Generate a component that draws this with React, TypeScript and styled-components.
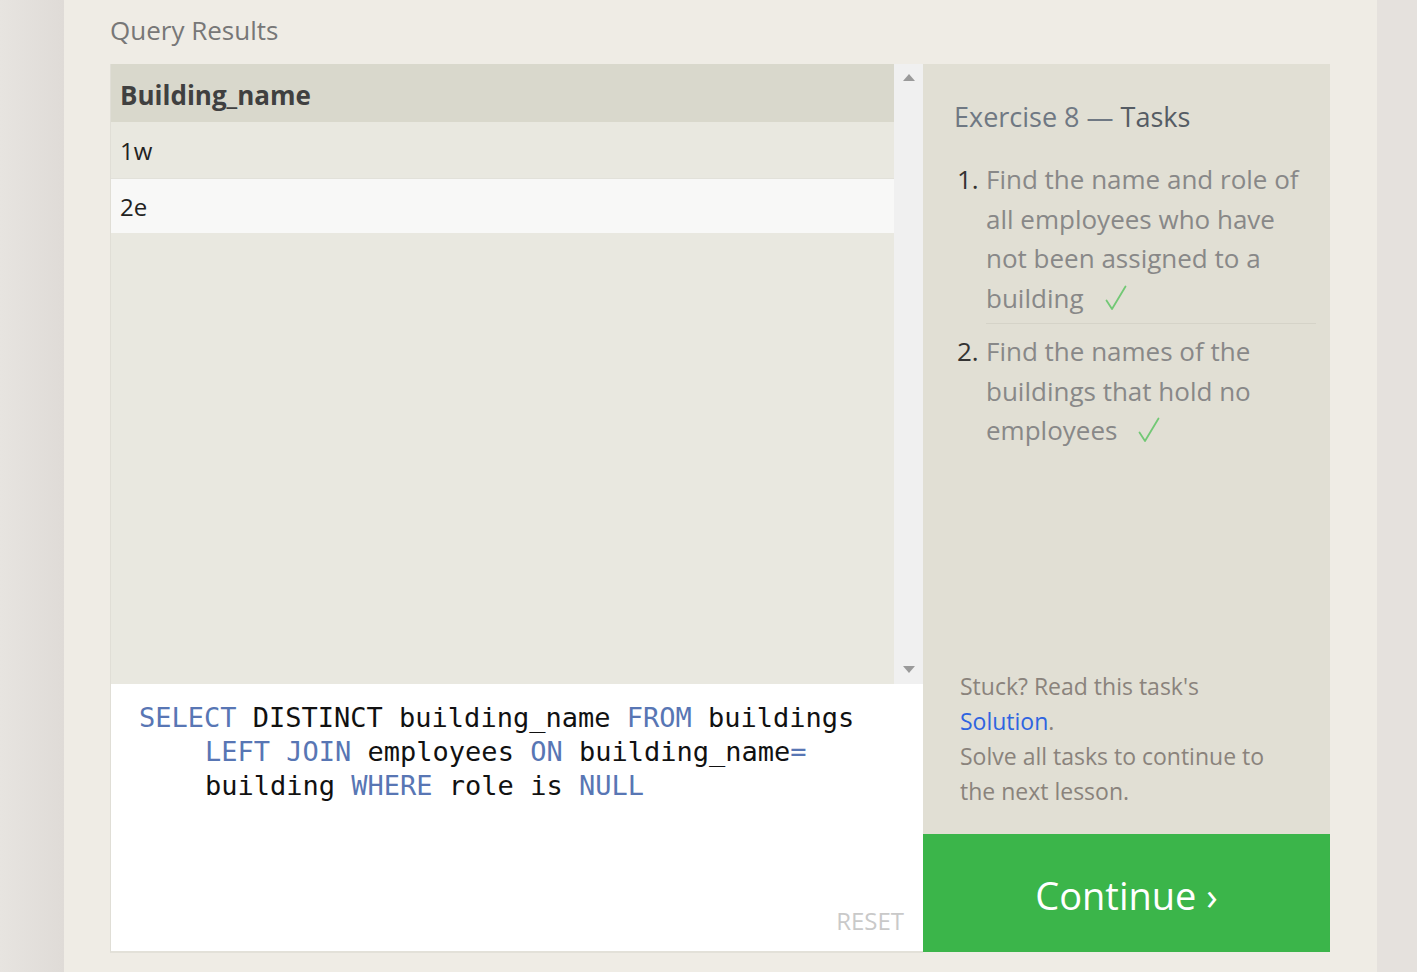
import React from "react";
import styled, { createGlobalStyle } from "styled-components";

const Global = createGlobalStyle`
  html, body { margin: 0; padding: 0; }
  body {
    background: #e5e1dd;
    font-family: "Open Sans", "Noto Sans", sans-serif;
    overflow: hidden;
  }
`;

const Page = styled.div`
  width: 1417px;
  height: 972px;
  display: flex;
  background: linear-gradient(90deg, #e7e4e0 0px, #dfdbd7 64px, #e5e1dd 64px);
`;

const Sheet = styled.div`
  margin-left: 64px;
  width: 1313px;
  height: 972px;
  background: #efece5;
  padding: 0 47px 0 46px;
  box-sizing: border-box;
  display: flex;
  flex-direction: column;
`;

const Title = styled.div`
  height: 64px;
  font-size: 26px;
  color: #777;
  line-height: 60px;
`;

const Main = styled.div`
  display: grid;
  grid-template-columns: 813px 407px;
`;

const LeftCol = styled.div`
  display: flex;
  flex-direction: column;
  border-left: 1px solid #e0ded6;
  border-bottom: 2px solid #e3e1d9;
  box-sizing: border-box;
  height: 889px;
`;

const Results = styled.div`
  height: 620px;
  display: flex;
`;

const Table = styled.div`
  flex: 1;
  background: #e9e8e0;
  display: flex;
  flex-direction: column;
`;

const HeadRow = styled.div`
  height: 58px;
  background: #d9d8cc;
  display: flex;
  align-items: center;
  padding: 3px 0 0 9px;
  box-sizing: border-box;
  font-weight: 700;
  font-size: 26px;
  color: #404040;
`;

const Row = styled.div<{ $alt?: boolean }>`
  height: ${(p) => (p.$alt ? 55 : 56)}px;
  background: ${(p) => (p.$alt ? "#f8f8f7" : "#e9e8e0")};
  border-top: ${(p) => (p.$alt ? "1px solid #e2e1da" : "none")};
  display: flex;
  align-items: center;
  padding: 1px 0 0 9px;
  font-size: 24px;
  color: #222;
  box-sizing: border-box;
`;

const Scrollbar = styled.div`
  width: 29px;
  background: #f0f0f0;
  display: flex;
  flex-direction: column;
  justify-content: space-between;
  align-items: center;
  padding: 10px 0 11px;
  box-sizing: border-box;
`;

const Arrow = styled.div<{ $down?: boolean }>`
  width: 0;
  height: 0;
  border-left: 6px solid transparent;
  border-right: 6px solid transparent;
  ${(p) =>
    p.$down
      ? "border-top: 7px solid #9a9a9a;"
      : "border-bottom: 7px solid #9a9a9a;"}
`;

const Editor = styled.div`
  flex: 1;
  background: #fff;
  position: relative;
  padding: 17px 0 0 28px;
  box-sizing: border-box;
  font-family: "DejaVu Sans Mono", "Liberation Mono", monospace;
  font-size: 27px;
  line-height: 34px;
  color: #111;
  white-space: pre;
`;

const CodeLine = styled.div<{ $indent?: boolean }>`
  padding-left: ${(p) => (p.$indent ? "66px" : "0")};
`;

const Kw = styled.span`
  color: #5876b4;
`;

const Reset = styled.div`
  position: absolute;
  right: 19px;
  bottom: 13px;
  font-family: "Open Sans", sans-serif;
  font-size: 24px;
  color: #c9c9c9;
`;

const RightCol = styled.div`
  display: flex;
  flex-direction: column;
  height: 888px;
`;

const Tasks = styled.div`
  flex: 1;
  background: #e1dfd4;
  padding: 33px 14px 0 31px;
  display: flex;
  flex-direction: column;
`;

const TasksTitle = styled.div`
  font-size: 27px;
  color: #6f7883;
  line-height: 40px;
  margin-bottom: 23px;
`;

const TitleDark = styled.span`
  color: #555c64;
`;

const List = styled.ol`
  margin: 0;
  padding: 0;
  list-style: none;
`;

const Item = styled.li<{ $sep?: boolean }>`
  display: flex;
  font-size: 26px;
  line-height: 39.5px;
  margin-bottom: ${(p) => (p.$sep ? "8px" : "0")};
`;

const Num = styled.span`
  width: 32px;
  flex: none;
  color: #333;
  padding-left: 3px;
  box-sizing: border-box;
`;

const ItemText = styled.span<{ $sep?: boolean }>`
  flex: 1;
  color: #888;
  padding-bottom: ${(p) => (p.$sep ? "5px" : "0")};
  border-bottom: ${(p) => (p.$sep ? "1px solid #d5d3c8" : "none")};
`;

const CheckMark = styled.svg`
  display: inline-block;
  width: 22px;
  height: 26px;
  margin-left: 21px;
  vertical-align: -3px;
`;

const Check = () => (
  <CheckMark viewBox="0 0 22 26">
    <path
      d="M1.5 15.5 L7 24 L20.5 1.5"
      fill="none"
      stroke="#72c875"
      strokeWidth="1.8"
      strokeLinecap="round"
      strokeLinejoin="round"
    />
  </CheckMark>
);

const Help = styled.div`
  margin-top: auto;
  padding: 0 0 25px 6px;
  max-width: 318px;
  font-size: 23px;
  line-height: 35px;
  color: #8a837c;
`;

const Link = styled.a`
  color: #2f64e0;
  text-decoration: none;
`;

const Continue = styled.button`
  height: 118px;
  flex: none;
  border: none;
  background: #3bb54a;
  color: #fff;
  font-family: "Open Sans", sans-serif;
  font-size: 38px;
  display: flex;
  align-items: center;
  justify-content: center;
  padding: 4px 0 0;
  cursor: pointer;
`;

export default function App() {
  return (
    <>
      <Global />
      <Page>
        <Sheet>
          <Title>Query Results</Title>
          <Main>
            <LeftCol>
              <Results>
                <Table>
                  <HeadRow>Building_name</HeadRow>
                  <Row>1w</Row>
                  <Row $alt>2e</Row>
                </Table>
                <Scrollbar>
                  <Arrow />
                  <Arrow $down />
                </Scrollbar>
              </Results>
              <Editor>
                <CodeLine>
                  <Kw>SELECT</Kw> DISTINCT building_name <Kw>FROM</Kw> buildings
                </CodeLine>
                <CodeLine $indent>
                  <Kw>LEFT</Kw> <Kw>JOIN</Kw> employees <Kw>ON</Kw> building_name<Kw>=</Kw>
                </CodeLine>
                <CodeLine $indent>
                  building <Kw>WHERE</Kw> role is <Kw>NULL</Kw>
                </CodeLine>
                <Reset>RESET</Reset>
              </Editor>
            </LeftCol>
            <RightCol>
              <Tasks>
                <TasksTitle>
                  Exercise 8 — <TitleDark>Tasks</TitleDark>
                </TasksTitle>
                <List>
                  <Item $sep>
                    <Num>1.</Num>
                    <ItemText $sep>
                      Find the name and role of all employees who have not been
                      assigned to a building<Check />
                    </ItemText>
                  </Item>
                  <Item>
                    <Num>2.</Num>
                    <ItemText>
                      Find the names of the buildings that hold no employees
                      <Check />
                    </ItemText>
                  </Item>
                </List>
                <Help>
                  Stuck? Read this task's <Link href="#">Solution</Link>.
                  <br />
                  Solve all tasks to continue to the next lesson.
                </Help>
              </Tasks>
              <Continue>Continue ›</Continue>
            </RightCol>
          </Main>
        </Sheet>
      </Page>
    </>
  );
}
